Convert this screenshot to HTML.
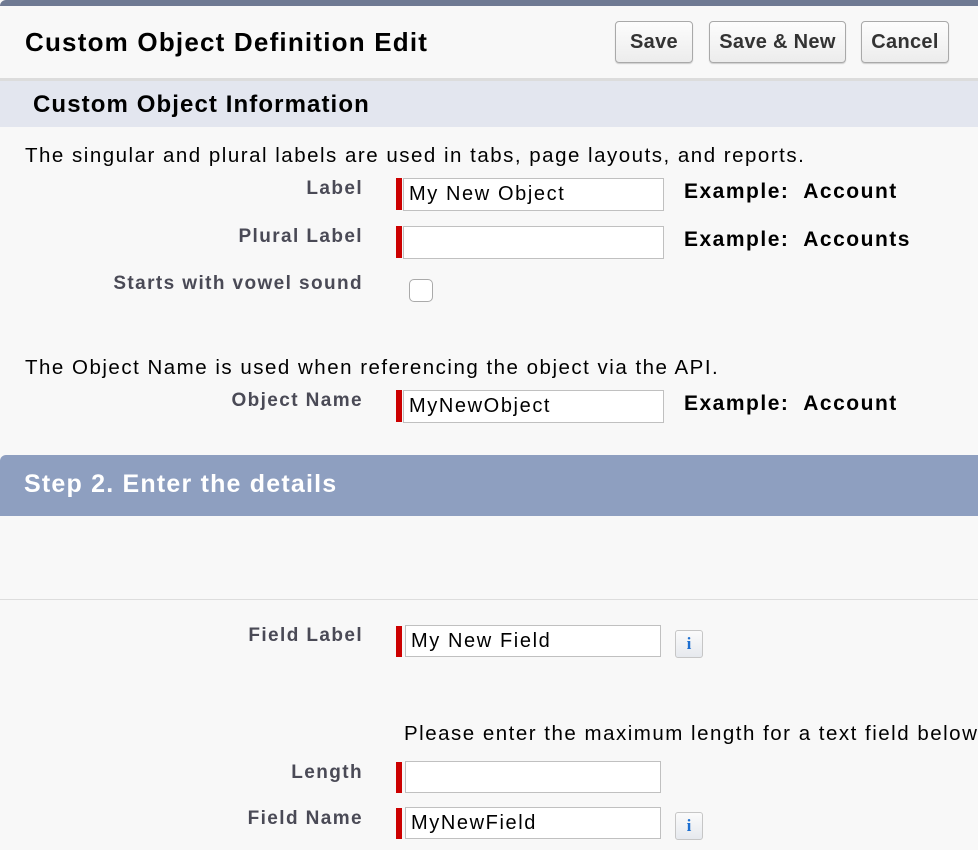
<!DOCTYPE html>
<html><head><style>
*{margin:0;padding:0;box-sizing:border-box}
body{width:978px;height:850px;overflow:hidden;background:#f8f8f8;font-family:"Liberation Sans",Arial,sans-serif;position:relative;color:#000}
.a{position:absolute;white-space:nowrap}
.topbar{left:0;top:0;width:978px;height:6px;background:#6f7a93;border-top-left-radius:6px}
.btn{position:absolute;top:21px;height:42px;border:1px solid #a9a9a9;border-radius:4px;background:linear-gradient(#fdfdfd,#ececec);font-weight:bold;font-size:20px;color:#333;text-align:center;line-height:40px;box-shadow:0 1px 1px #ccc;letter-spacing:0.3px}
.lbl{font-weight:bold;font-size:19px;color:#4a4a56;text-align:right;right:615px;letter-spacing:1.4px}
.req{position:absolute;width:6px;background:#c00}
.inp{position:absolute;background:#fff;border:1px solid #c0c0c0;font-size:20px;padding-left:5px;line-height:30px;letter-spacing:1.6px}
.ex{font-weight:bold;font-size:21px;letter-spacing:1.5px}
.txt{font-size:20.5px;letter-spacing:1.5px}
.info{position:absolute;width:28px;height:28px;border:1px solid #c6c6c6;border-radius:3px;background:linear-gradient(#fbfbfb,#e6e9ee);color:#1d6fd0;font-family:"Liberation Serif",serif;font-weight:bold;font-size:17px;text-align:center;line-height:26px}
</style></head><body>
<div class="a topbar"></div>
<div class="a" style="left:25px;top:27px;font-size:26px;font-weight:bold;letter-spacing:1.2px">Custom Object Definition Edit</div>
<div class="btn" style="left:615px;width:78px">Save</div>
<div class="btn" style="left:709px;width:137px">Save &amp; New</div>
<div class="btn" style="left:861px;width:88px">Cancel</div>
<div class="a" style="left:0;top:78px;width:978px;height:3px;background:#dcdcdc"></div>
<div class="a" style="left:0;top:81px;width:978px;height:46px;background:#e3e6ef"></div>
<div class="a" style="left:33px;top:91px;font-size:24px;font-weight:bold;letter-spacing:1.1px">Custom Object Information</div>
<div class="a txt" style="left:25px;top:144px">The singular and plural labels are used in tabs, page layouts, and reports.</div>
<div class="a lbl" style="top:178px">Label</div>
<div class="req" style="left:396px;top:178px;height:32px"></div>
<div class="inp" style="left:403px;top:178px;width:261px;height:33px">My New Object</div>
<div class="a ex" style="left:684px;top:180px">Example:&nbsp; Account</div>
<div class="a lbl" style="top:226px">Plural Label</div>
<div class="req" style="left:396px;top:226px;height:32px"></div>
<div class="inp" style="left:403px;top:226px;width:261px;height:33px"></div>
<div class="a ex" style="left:684px;top:228px">Example:&nbsp; Accounts</div>
<div class="a lbl" style="top:273px">Starts with vowel sound</div>
<div class="a" style="left:409px;top:279px;width:24px;height:23px;border:1px solid #aaa;border-radius:5px;background:#fff"></div>
<div class="a txt" style="left:25px;top:356px">The Object Name is used when referencing the object via the API.</div>
<div class="a lbl" style="top:390px">Object Name</div>
<div class="req" style="left:396px;top:390px;height:32px"></div>
<div class="inp" style="left:403px;top:390px;width:261px;height:33px">MyNewObject</div>
<div class="a ex" style="left:684px;top:392px">Example:&nbsp; Account</div>
<div class="a" style="left:0;top:455px;width:978px;height:61px;background:#8e9fc0;border-top-left-radius:6px"></div>
<div class="a" style="left:24px;top:470px;font-size:25px;font-weight:bold;color:#fff;letter-spacing:1.2px">Step 2. Enter the details</div>
<div class="a" style="left:0;top:599px;width:978px;height:1px;background:#ddd"></div>
<div class="a lbl" style="top:625px">Field Label</div>
<div class="req" style="left:396px;top:626px;height:31px"></div>
<div class="inp" style="left:405px;top:625px;width:256px;height:32px">My New Field</div>
<div class="info" style="left:675px;top:630px">i</div>
<div class="a txt" style="left:404px;top:722px">Please enter the maximum length for a text field below</div>
<div class="a lbl" style="top:762px">Length</div>
<div class="req" style="left:396px;top:762px;height:31px"></div>
<div class="inp" style="left:405px;top:761px;width:256px;height:32px"></div>
<div class="a lbl" style="top:808px">Field Name</div>
<div class="req" style="left:396px;top:808px;height:31px"></div>
<div class="inp" style="left:405px;top:807px;width:256px;height:32px">MyNewField</div>
<div class="info" style="left:675px;top:812px">i</div>
</body></html>
